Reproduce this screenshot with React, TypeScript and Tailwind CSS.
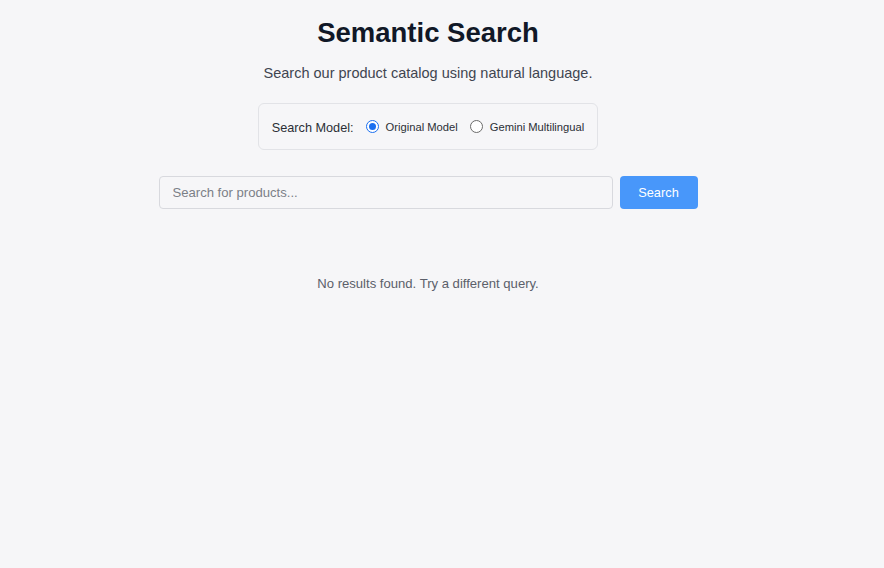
import React, { useState } from "react";

function Radio({ checked, label, onClick }: { checked: boolean; label: string; onClick: () => void }) {
  return (
    <label className="flex items-center gap-[7px] cursor-pointer" onClick={onClick}>
      <span
        className={
          checked
            ? "w-[13px] h-[13px] rounded-full border-[1.5px] border-[#1a6ff0] bg-white flex items-center justify-center"
            : "w-[13px] h-[13px] rounded-full border-[1.5px] border-[#6b6b6b] bg-white"
        }
      >
        {checked && <span className="w-[7px] h-[7px] rounded-full bg-[#1a6ff0]" />}
      </span>
      <span className="text-[11.2px] text-[#2b2f36] leading-[16px]">{label}</span>
    </label>
  );
}

export default function App() {
  const [model, setModel] = useState("original");
  return (
    <div
      className="w-full min-h-[568px] bg-[#f6f6f8]"
      style={{ fontFamily: '"Liberation Sans", Arial, sans-serif' }}
    >
      <div className="w-[856px] flex flex-col items-center">
        <h1 className="mt-[16px] text-[27.5px] leading-[33px] font-bold text-[#111827]">Semantic Search</h1>
        <p className="mt-[14px] text-[14.5px] leading-[20px] text-[#3f4550]">
          Search our product catalog using natural language.
        </p>
        <div className="mt-[20px] h-[47px] px-[13px] flex items-center gap-[12px] border border-[#e2e3e7] rounded-[6px] bg-[#f6f6f8]">
          <span className="text-[12.7px] leading-[16px] pt-[2px] text-[#2b2f36]">Search Model:</span>
          <Radio checked={model === "original"} label="Original Model" onClick={() => setModel("original")} />
          <Radio checked={model === "gemini"} label="Gemini Multilingual" onClick={() => setModel("gemini")} />
        </div>
        <div className="mt-[26px] flex gap-[7px] w-[539px]">
          <input
            className="flex-1 h-[33px] px-[13px] border border-[#d8d9de] rounded-[4px] bg-[#f6f6f8] text-[13.1px] text-[#1f2937] placeholder:text-[#7b7f87] outline-none"
            placeholder="Search for products..."
          />
          <button className="w-[78px] h-[33px] rounded-[4px] bg-[#4897fa] text-white text-[12.8px]">Search</button>
        </div>
        <p className="mt-[66px] text-[13.1px] leading-[18px] text-[#5b606a]">No results found. Try a different query.</p>
      </div>
    </div>
  );
}
